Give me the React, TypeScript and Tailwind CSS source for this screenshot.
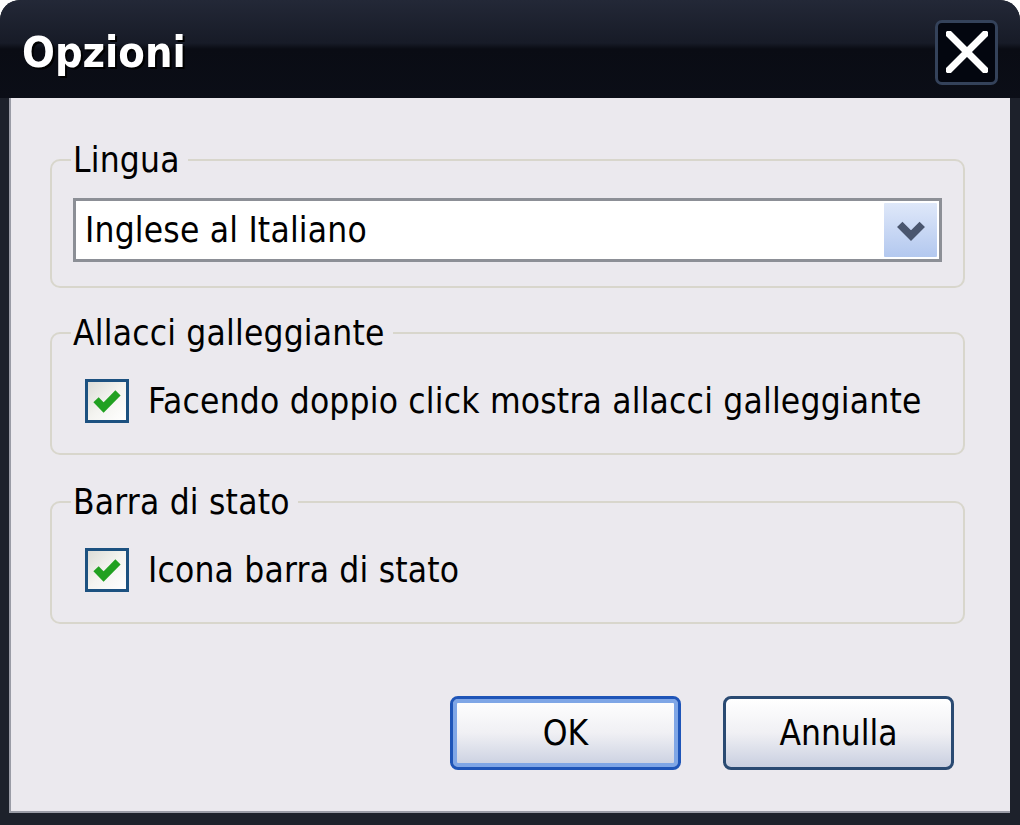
import { ReactNode } from 'react'

const uiFont = { fontFamily: '"DejaVu Sans Condensed", "DejaVu Sans", sans-serif' }

// 체크박스 (XP 스타일)
function CheckRow({ label }: { label: string }) {
  return (
    <div className="flex items-center gap-[19px]">
      <div className="w-[44px] h-[44px] border-[3px] border-[#1c5180] bg-gradient-to-br from-[#dcdcd7] via-[#f4f4f0] to-white flex items-center justify-center">
        <svg width="34" height="34" viewBox="0 0 13 13">
          <path d="M2.3 6 L5.2 9 L10.7 3.4" fill="none" stroke="#21a121" strokeWidth="2.8" strokeLinejoin="miter" />
        </svg>
      </div>
      <span className="text-[35px] leading-[40px] tracking-[0.2px] text-black">{label}</span>
    </div>
  )
}

// 그룹 박스
function Group({ title, children, className }: { title: string; children: ReactNode; className?: string }) {
  return (
    <fieldset className={`border-2 border-[#d8d6cc] rounded-[10px] ${className ?? ''}`}>
      <legend className="ml-[19px] pl-[2px] pr-[8px] text-[35px] leading-[40px] tracking-[0.2px] text-black">{title}</legend>
      {children}
    </fieldset>
  )
}

function XpButton({ label, isDefault }: { label: string; isDefault?: boolean }) {
  return (
    <button
      className={`w-[231px] h-[74px] rounded-[8px] border-[3px] ${
        isDefault ? 'border-[#1f55b8] shadow-[inset_0_0_0_4px_#7fa6e6]' : 'border-[#2a4a72]'
      } bg-gradient-to-b from-white via-[#f0f0f4] to-[#c9cfe0] text-[35px] text-black`}
    >
      {label}
    </button>
  )
}

export default function App() {
  return (
    <div className="w-[1020px] h-[825px] bg-white" style={uiFont}>
      <div className="w-full h-full flex flex-col rounded-t-[20px] bg-[#1d212b] overflow-hidden">
        {/* 타이틀 바 */}
        <div className="h-[98px] shrink-0 flex items-center justify-between pl-[22px] pr-[22px] pt-[6px] bg-[linear-gradient(to_bottom,#232837_0%,#171b27_44%,#0a0c14_50%,#0b0e17_100%)]">
          <span className="text-white font-bold text-[43px] drop-shadow-[2px_2px_0_#000]">Opzioni</span>
          <div className="w-[63px] h-[65px] rounded-[7px] border-[3px] border-[#34425a] bg-[#03060f] flex items-center justify-center">
            <svg width="42" height="42" viewBox="0 0 42 42">
              <path d="M3 3 L39 39 M39 3 L3 39" stroke="white" strokeWidth="7" strokeLinecap="square" />
            </svg>
          </div>
        </div>

        {/* 본문 */}
        <div className="flex-1 flex pl-[9px] pr-[10px] pb-[12px]">
          <div className="flex-1 flex flex-col bg-[#ebe9ee] border-l-2 border-b-2 border-[#9a9ca6] pl-[39px] pr-[45px] pt-[42px]">
            <Group title="Lingua" className="pb-[24px]">
              <div className="mx-[21px] mt-[18px] h-[64px] border-[3px] border-[#8c8f96] bg-white flex items-center">
                <span className="flex-1 pl-[9px] text-[35px] tracking-[0.2px] text-black">Inglese al Italiano</span>
                <div className="w-[57px] h-full border-2 border-white rounded-[3px] bg-gradient-to-b from-[#dfe8f9] to-[#b3c8ef] flex items-center justify-center">
                  <svg width="36" height="36" viewBox="0 0 16 16">
                    <path d="M3 5.5 L8 10.5 L13 5.5" fill="none" stroke="#4a566e" strokeWidth="3.4" />
                  </svg>
                </div>
              </div>
            </Group>

            <Group title="Allacci galleggiante" className="mt-[25px] pb-[30px]">
              <div className="pl-[33px] pt-[26px]">
                <CheckRow label="Facendo doppio click mostra allacci galleggiante" />
              </div>
            </Group>

            <Group title="Barra di stato" className="mt-[27px] pb-[30px]">
              <div className="pl-[33px] pt-[26px]">
                <CheckRow label="Icona barra di stato" />
              </div>
            </Group>

            <div className="mt-[72px] flex justify-end gap-[42px] pr-[11px]">
              <XpButton label="OK" isDefault />
              <XpButton label="Annulla" />
            </div>
          </div>
        </div>
      </div>
    </div>
  )
}
